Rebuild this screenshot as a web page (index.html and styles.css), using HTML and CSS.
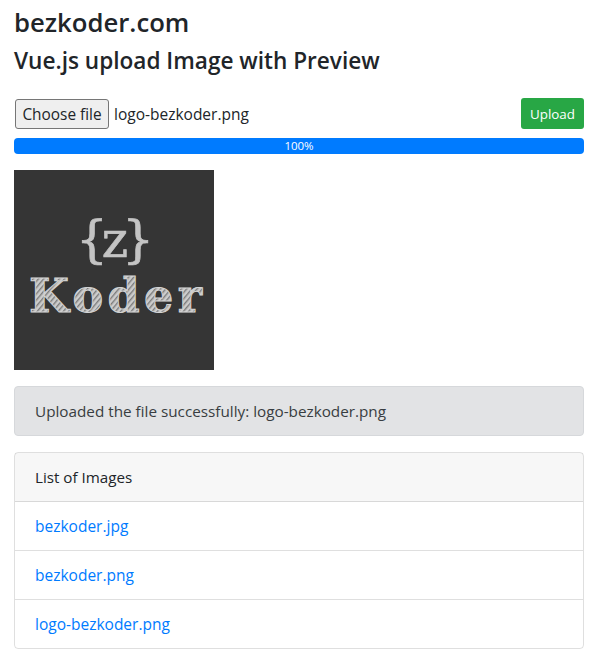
FILE: index.html
```html
<!DOCTYPE html>
<html lang="en">

<head>
    <meta charset="UTF-8">
    <meta name="viewport" content="width=device-width, initial-scale=1.0">
    <title>bezkoder.com</title>
    <link rel="stylesheet" href="styles.css">
</head>

<body>
    <div class="container">
        <h3 class="brand">bezkoder.com</h3>
        <h4 class="subtitle">Vue.js upload Image with Preview</h4>

        <div class="upload-row">
            <div class="file-picker">
                <button class="choose-btn">Choose file</button>
                <span class="file-name">logo-bezkoder.png</span>
            </div>
            <button class="upload-btn">Upload</button>
        </div>

        <div class="progress">
            <div class="progress-bar" style="width: 100%">100%</div>
        </div>

        <svg class="preview" width="200" height="200" viewBox="0 0 200 200" role="img" aria-label="Preview">
            <defs>
                <pattern id="chalk" width="4" height="4" patternUnits="userSpaceOnUse" patternTransform="rotate(-50)">
                    <rect width="4" height="4" fill="#cccccc"></rect>
                    <rect width="4" height="1.4" fill="#7c7c7c"></rect>
                </pattern>
            </defs>
            <rect width="200" height="200" fill="#353535"></rect>
            <text class="logo-brace" x="62" y="87" textLength="78">{z}</text>
            <text class="logo-word" x="15" y="142" textLength="173">Koder</text>
        </svg>

        <div class="alert">Uploaded the file successfully: logo-bezkoder.png</div>

        <div class="card">
            <div class="card-header">List of Images</div>
            <ul class="list-group">
                <li class="list-item"><a href="#">bezkoder.jpg</a></li>
                <li class="list-item"><a href="#">bezkoder.png</a></li>
                <li class="list-item"><a href="#">logo-bezkoder.png</a></li>
            </ul>
        </div>
    </div>
</body>

</html>
```

FILE: styles.css
```css
body {
    margin: 0;
    background-color: #fff;
    color: #212529;
    font-family: 'Open Sans', 'Noto Sans', sans-serif;
    font-size: 15.5px;
}

.container {
    padding: 0 16px 0 14px;
}

.brand {
    margin: 0;
    padding-top: 6px;
    font-size: 25.7px;
    font-weight: 600;
    line-height: 34px;
}

.subtitle {
    margin: 0 0 17px;
    font-size: 22.6px;
    font-weight: 600;
    line-height: 41px;
}

.upload-row {
    display: flex;
    align-items: center;
    justify-content: space-between;
    margin-bottom: 9px;
}

.file-picker {
    display: flex;
    align-items: center;
    gap: 5px;
}

.file-name {
    padding-top: 1px;
}

.choose-btn {
    height: 30px;
    width: 94px;
    margin-left: 1px;
    padding: 2px 0 0;
    border: 1px solid #767676;
    border-radius: 3px;
    background-color: #efefef;
    color: #212529;
    font-family: inherit;
    font-size: 15.4px;
}

.upload-btn {
    height: 31px;
    width: 63px;
    padding: 0;
    border: none;
    border-radius: 3px;
    background-color: #28a745;
    color: #fff;
    font-family: inherit;
    font-size: 13.4px;
}

.progress {
    height: 16px;
    border-radius: 4px;
    overflow: hidden;
    background-color: #e9ecef;
    margin-bottom: 16px;
}

.progress-bar {
    height: 100%;
    background-color: #007bff;
    color: #fff;
    font-size: 11.5px;
    line-height: 16px;
    text-align: center;
}

.preview {
    display: block;
    margin-bottom: 16px;
}

.logo-brace {
    fill: #c4c4c4;
    stroke: #c4c4c4;
    stroke-width: 0.7;
    font-family: 'DejaVu Serif', serif;
    font-size: 50px;
}

.logo-word {
    fill: url(#chalk);
    stroke: #d4d4d4;
    stroke-width: 1;
    font-family: 'DejaVu Serif', serif;
    font-size: 46px;
    font-weight: bold;
}

.alert {
    box-sizing: border-box;
    height: 50px;
    padding: 0 20px;
    margin-bottom: 16px;
    border: 1px solid #d6d8db;
    border-radius: 4px;
    background-color: #e2e3e5;
    color: #383d41;
    font-size: 15.27px;
    line-height: 48px;
}

.card {
    border: 1px solid rgba(0, 0, 0, 0.125);
    border-radius: 4px;
}

.card-header {
    height: 48px;
    padding: 0 20px;
    border-bottom: 1px solid rgba(0, 0, 0, 0.125);
    background-color: rgba(0, 0, 0, 0.03);
    font-size: 15.2px;
    line-height: 48px;
}

.list-group {
    margin: 0;
    padding: 0;
    list-style: none;
}

.list-item {
    height: 48px;
    padding: 0 20px;
    border-bottom: 1px solid rgba(0, 0, 0, 0.125);
    line-height: 48px;
}

.list-item:last-child {
    border-bottom: none;
}

.list-item a {
    color: #007bff;
    text-decoration: none;
}
```
